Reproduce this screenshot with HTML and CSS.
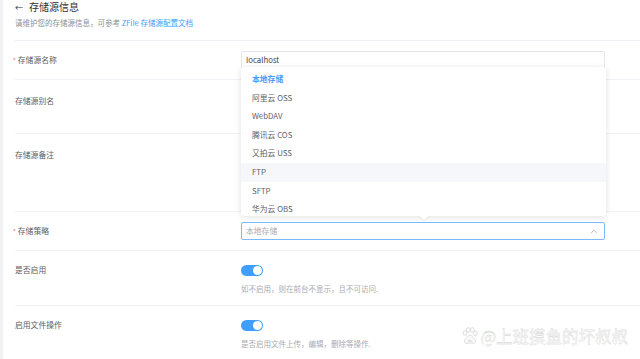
FILE: index.html
```html
<!DOCTYPE html>
<html lang="zh-CN">
<head>
    <meta charset="UTF-8">
    <meta name="viewport" content="width=device-width, initial-scale=1.0">
    <title>存储源信息</title>
    <link rel="stylesheet" href="styles.css">
</head>
<body>
    <div class="page">
        <div class="header">
            <div class="title"><span class="back">&larr;</span>存储源信息</div>
            <div class="subtitle">请维护您的存储源信息，可参考 <a class="doc-link">ZFile 存储源配置文档</a></div>
        </div>

        <div class="row row-tight">
            <div class="label required">存储源名称</div>
            <div class="field">
                <div class="input">localhost</div>
            </div>
        </div>

        <div class="row row-loose">
            <div class="label">存储源别名</div>
            <div class="field">
                <div class="input"></div>
                <div class="spacer"></div>
            </div>
        </div>

        <div class="row row-loose">
            <div class="label">存储源备注</div>
            <div class="field">
                <div class="textarea"></div>
            </div>
        </div>

        <div class="row row-tight">
            <div class="label required">存储策略</div>
            <div class="field select-wrap">
                <div class="input select is-focus">
                    <span class="placeholder">本地存储</span>
                    <svg class="chevron" width="8" height="5" viewBox="0 0 8 5"><path d="M1 4.2 4 1.2 7 4.2" fill="none" stroke="#b8bcc4" stroke-width="1"/></svg>
                </div>
                <div class="dropdown">
                    <ul class="options">
                        <li class="option selected">本地存储</li>
                        <li class="option">阿里云 OSS</li>
                        <li class="option">WebDAV</li>
                        <li class="option">腾讯云 COS</li>
                        <li class="option">又拍云 USS</li>
                        <li class="option hover">FTP</li>
                        <li class="option">SFTP</li>
                        <li class="option">华为云 OBS</li>
                    </ul>
                    <span class="arrow"></span>
                </div>
            </div>
        </div>

        <div class="row row-switch">
            <div class="label">是否启用</div>
            <div class="field">
                <div class="switch-line"><span class="switch"></span></div>
                <div class="help">如不启用，则在前台不显示，且不可访问.</div>
            </div>
        </div>

        <div class="row row-switch last">
            <div class="label">启用文件操作</div>
            <div class="field">
                <div class="switch-line"><span class="switch"></span></div>
                <div class="help">是否启用文件上传，编辑，删除等操作.</div>
            </div>
        </div>
    </div>

    <div class="watermark">
        <svg width="18" height="18" viewBox="0 0 18 18">
            <g fill="#fafafa" stroke="#d2d2d2" stroke-width="0.7">
                <ellipse cx="4" cy="6" rx="2" ry="2.4"/>
                <ellipse cx="7.3" cy="3" rx="2" ry="2.4"/>
                <ellipse cx="11.3" cy="3" rx="2" ry="2.4"/>
                <ellipse cx="14.3" cy="6.4" rx="2" ry="2.4"/>
                <path d="M9 8.2c-2.2 0-3 2.4-4.6 3.8C2.6 13.6 3.4 16.6 6 16.4c1.3-.1 2-.5 3-.5s1.7.4 3 .5c2.6.2 3.4-2.8 1.6-4.4C12 10.6 11.2 8.2 9 8.2z"/>
            </g>
            <text x="9" y="15" font-size="4.2" text-anchor="middle" fill="#cdcdcd" font-family="Liberation Sans, sans-serif">du</text>
        </svg>
        <span>@上班摸鱼的坏叔叔</span>
    </div>
</body>
</html>
```

FILE: styles.css
```css
body {
    margin: 0;
    background: #fff;
    font-family: "Noto Sans CJK SC", "Noto Sans", sans-serif;
    font-size: 7.8px;
    color: #606266;
    height: 359px;
    overflow: hidden;
    border-left: 3px solid #f0f2f5;
    box-sizing: border-box;
}

.page {
    padding-left: 12px;
}

.header {
    height: 40px;
    border-bottom: 1px solid #eef0f3;
}

.title {
    font-size: 10px;
    line-height: 14px;
    color: #303133;
}

.back {
    display: inline-block;
    width: 14px;
    font-size: 8px;
}

.subtitle {
    margin-top: 2px;
    line-height: 12px;
    font-size: 7.5px;
    color: #8c8f96;
}

.doc-link {
    color: #409eff;
}

.row {
    display: grid;
    grid-template-columns: 226px 364px;
    border-bottom: 1px solid #f0f2f5;
    box-sizing: border-box;
}

.row-tight {
    height: 39px;
    padding: 10px 0;
}

.row-loose {
    padding: 12px 0;
}

.row-switch {
    height: 55px;
    padding-top: 10px;
}

.row.last {
    border-bottom: none;
}

.label {
    height: 18px;
    line-height: 18px;
    color: #5a5d63;
}

.label.required::before {
    content: "*";
    color: #f56c6c;
    margin-left: -2px;
    margin-right: 2px;
    font-size: 6px;
}

.field {
    min-width: 0;
}

.input {
    height: 18px;
    box-sizing: border-box;
    border: 1px solid #e4e7ed;
    border-radius: 2px;
    padding: 0 4px;
    line-height: 16px;
    color: #454850;
}

.spacer {
    height: 11px;
}

.textarea {
    height: 53px;
    box-sizing: border-box;
    border: 1px solid #e4e7ed;
    border-radius: 2px;
}

.select-wrap {
    position: relative;
}

.select {
    display: flex;
    align-items: center;
    justify-content: space-between;
    padding-right: 6px;
}

.select.is-focus {
    border-color: #79bbff;
}

.placeholder {
    color: #a8abb2;
}

.dropdown {
    position: absolute;
    left: 0;
    right: -1px;
    bottom: calc(100% + 6px);
    height: 149px;
    background: #fff;
    border-radius: 3px;
    box-shadow: 0 1px 6px rgba(0, 0, 0, 0.12);
    z-index: 2;
}

.options {
    list-style: none;
    margin: 0;
    padding: 3px 0 0;
    height: 100%;
    box-sizing: border-box;
    overflow: hidden;
}

.option {
    height: 18.6px;
    line-height: 18.6px;
    padding-left: 11px;
    color: #606266;
}

.option.selected {
    color: #409eff;
    font-weight: 700;
}

.option.hover {
    background: #f5f7fa;
}

.arrow {
    position: absolute;
    left: 50%;
    bottom: -3px;
    width: 6px;
    height: 6px;
    margin-left: -3px;
    background: #fff;
    transform: rotate(45deg);
    box-shadow: 1px 1px 2px rgba(0, 0, 0, 0.06);
}

.switch-line {
    height: 18px;
    display: flex;
    align-items: center;
}

.switch {
    position: relative;
    display: inline-block;
    width: 22px;
    height: 11px;
    border-radius: 6px;
    background: #409eff;
}

.switch::after {
    content: "";
    position: absolute;
    right: 1px;
    top: 1px;
    width: 9px;
    height: 9px;
    border-radius: 50%;
    background: #fff;
}

.help {
    margin-top: 4px;
    height: 11px;
    line-height: 11px;
    font-size: 7.5px;
    color: #a8abb2;
}

.watermark {
    position: absolute;
    right: 12px;
    bottom: 13px;
    display: flex;
    align-items: center;
    gap: 1px;
    font-size: 16.5px;
    line-height: 20px;
    color: #fcfcfc;
    -webkit-text-stroke: 0.3px #cccccc;
}
```
